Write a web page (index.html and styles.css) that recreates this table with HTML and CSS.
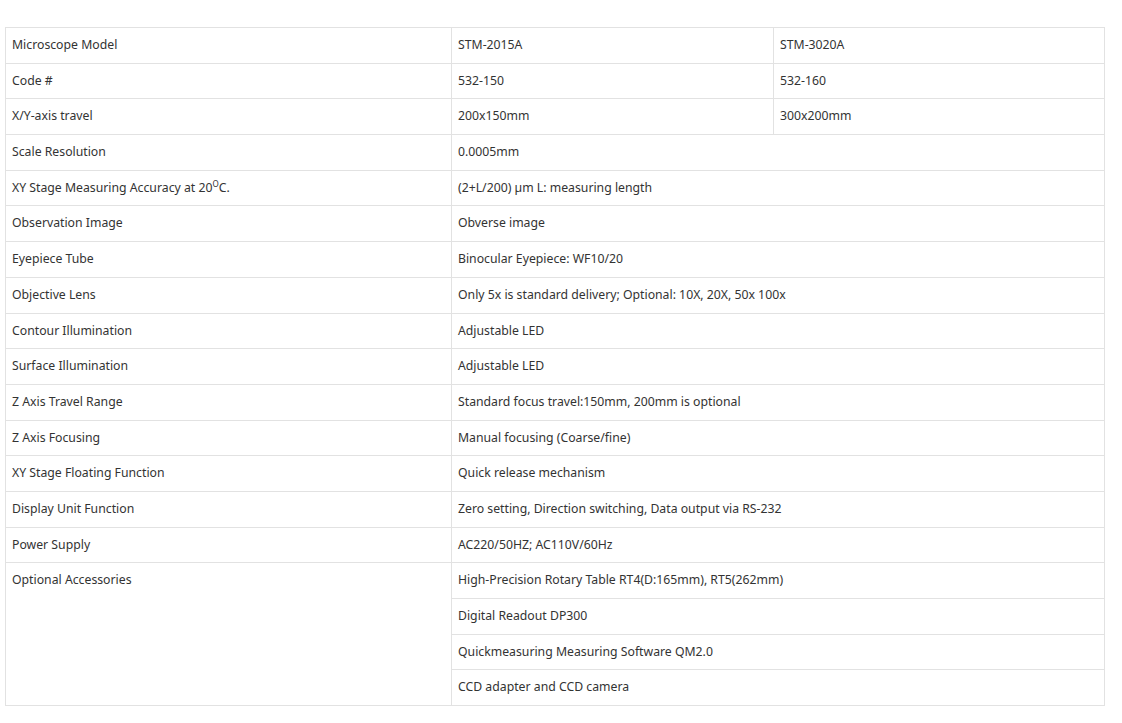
FILE: index.html
```html
<!DOCTYPE html>
<html lang="en">
<head>
<meta charset="utf-8">
<title>Microscope Specifications</title>
<link rel="stylesheet" href="styles.css">
</head>
<body>
<div class="page">
<table class="spec">
<colgroup><col class="c1"><col class="c2"><col class="c3"></colgroup>
<tbody>
<tr><td>Microscope Model</td><td>STM-2015A</td><td>STM-3020A</td></tr>
<tr><td>Code #</td><td>532-150</td><td>532-160</td></tr>
<tr><td>X/Y-axis travel</td><td>200x150mm</td><td>300x200mm</td></tr>
<tr><td>Scale Resolution</td><td colspan="2">0.0005mm</td></tr>
<tr><td>XY Stage Measuring Accuracy at 20<sup>O</sup>C.</td><td colspan="2">(2+L/200) µm L: measuring length</td></tr>
<tr><td>Observation Image</td><td colspan="2">Obverse image</td></tr>
<tr><td>Eyepiece Tube</td><td colspan="2">Binocular Eyepiece: WF10/20</td></tr>
<tr><td>Objective Lens</td><td colspan="2">Only 5x is standard delivery; Optional: 10X, 20X, 50x 100x</td></tr>
<tr><td>Contour Illumination</td><td colspan="2">Adjustable LED</td></tr>
<tr><td>Surface Illumination</td><td colspan="2">Adjustable LED</td></tr>
<tr><td>Z Axis Travel Range</td><td colspan="2">Standard focus travel:150mm, 200mm is optional</td></tr>
<tr><td>Z Axis Focusing</td><td colspan="2">Manual focusing (Coarse/fine)</td></tr>
<tr><td>XY Stage Floating Function</td><td colspan="2">Quick release mechanism</td></tr>
<tr><td>Display Unit Function</td><td colspan="2">Zero setting, Direction switching, Data output via RS-232</td></tr>
<tr><td>Power Supply</td><td colspan="2">AC220/50HZ; AC110V/60Hz</td></tr>
<tr><td rowspan="4">Optional Accessories</td><td colspan="2">High-Precision Rotary Table RT4(D:165mm), RT5(262mm)</td></tr>
<tr><td colspan="2">Digital Readout DP300</td></tr>
<tr><td colspan="2">Quickmeasuring Measuring Software QM2.0</td></tr>
<tr><td colspan="2">CCD adapter and CCD camera</td></tr>
</tbody>
</table>
</div>
</body>
</html>
```
FILE: styles.css
```css
html, body {
  margin: 0;
  padding: 0;
  background: #ffffff;
}
.page {
  padding: 27px 0 0 5px;
}
.spec {
  border-collapse: collapse;
  width: 1099px;
  table-layout: fixed;
  font-family: "Noto Sans", "Open Sans", sans-serif;
  font-size: 12.25px;
  color: #333333;
}
.c1 { width: 446px; }
.c2 { width: 322px; }
.c3 { width: 331px; }
.spec td {
  border: 1px solid #e2e2e2;
  padding: 7px 6px;
  line-height: 20.68px;
  vertical-align: top;
  text-align: left;
  white-space: nowrap;
}
.spec sup {
  font-size: 8px;
  line-height: 0;
  vertical-align: 5px;
}
```
